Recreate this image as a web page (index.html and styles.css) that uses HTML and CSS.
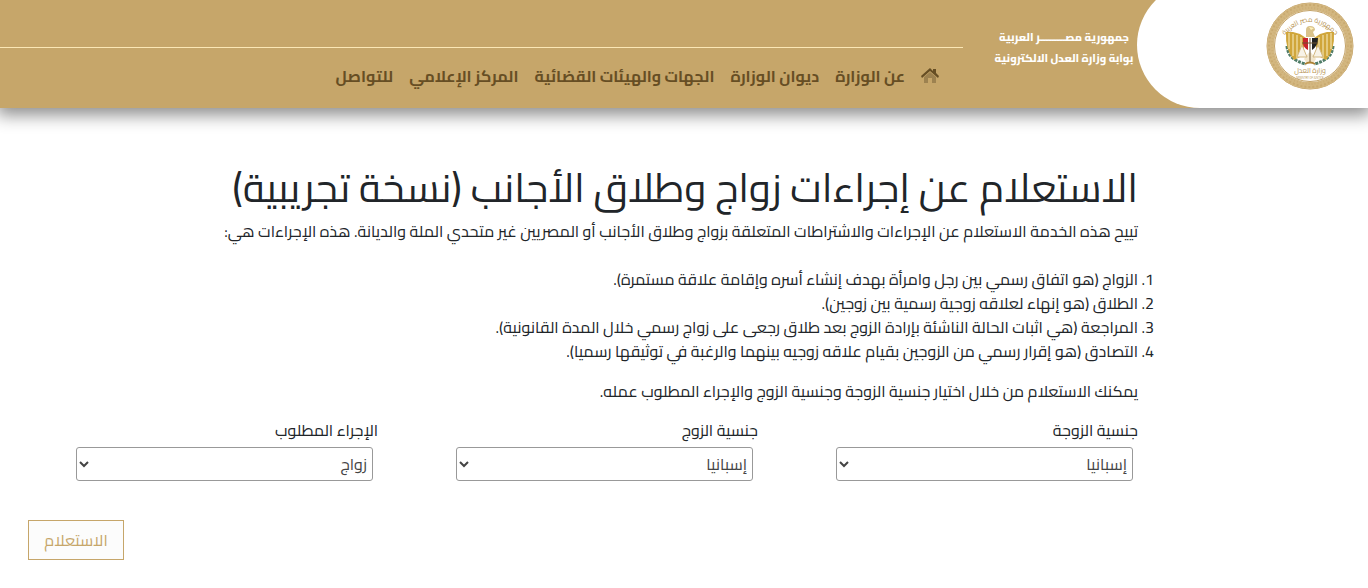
FILE: index.html
```html
<!DOCTYPE html>
<html lang="ar" dir="rtl">
<head>
    <meta charset="UTF-8">
    <meta name="viewport" content="width=device-width, initial-scale=1.0">
    <title>بوابة وزارة العدل الالكترونية</title>
    <link rel="stylesheet" href="styles.css">
</head>
<body>

    <header class="site-header">
        <div class="header-inner">
            <div class="logo-area">
                <svg class="logo" viewBox="0 0 88 88" role="img" aria-label="وزارة العدل">
                    <defs>
                        <path id="seal-top" d="M16 36 Q44 4 72 36"/>
                    </defs>
                    <circle cx="44" cy="44" r="43" fill="#fff" stroke="#c3a164" stroke-width="1"/>
                    <circle cx="44" cy="44" r="39.5" fill="none" stroke="#d3b780" stroke-width="7"/>
                    <circle cx="44" cy="44" r="41" fill="none" stroke="#c9aa70" stroke-width="2" stroke-dasharray="2 2"/>
                    <circle cx="44" cy="44" r="38" fill="none" stroke="#ccae76" stroke-width="2" stroke-dasharray="1 2"/>
                    <circle cx="44" cy="44" r="35.5" fill="#fff" stroke="#c3a164" stroke-width="1"/>
                    <text class="seal-text" font-size="7"><textPath href="#seal-top" startOffset="50%" text-anchor="middle">جمهورية مصر العربية</textPath></text>
                    <!-- laurel -->
                    <path d="M21 44 Q22 58 40 62 M67 44 Q66 58 48 62" fill="none" stroke="#507d68" stroke-width="3" stroke-dasharray="3 1"/>
                    <!-- wings -->
                    <path d="M40 36 L34 32 L27 30 L20 30 Q19 48 28 58 L36 54 Z M48 36 L54 32 L61 30 L68 30 Q69 48 60 58 L52 54 Z" fill="#d0a63b"/>
                    <path d="M23 31 V47 M27 32 V54 M31 33 V56 M35 35 V54 M65 31 V47 M61 32 V54 M57 33 V56 M53 35 V54" fill="none" stroke="#f8edc5" stroke-width="1"/>
                    <path d="M38 57 L44 49 L50 57 L48 60 H40 Z" fill="#f2e6cc"/>
                    <!-- head -->
                    <path d="M40 35 L40 28 Q40 24 44 24 Q49 24 49 28 L47 30 L49 35 Z" fill="#d9c28a"/>
                    <path d="M43 25 L48 26 L45 28 Z" fill="#fff2bd"/>
                    <!-- shield and scales -->
                    <path d="M37 36 H42 V48 Q38 46 37 42 Z" fill="#c9252d"/>
                    <path d="M42 36 H46 V49 L44 51 L42 49 Z" fill="#fff"/>
                    <path d="M46 36 H52 Q52 44 46 48 Z" fill="#222"/>
                    <path d="M36 41 H52 M44 36 V61" stroke="#6d5433" stroke-width="1"/>
                    <path d="M36 43 L31 55 H41 Z M52 43 L47 55 H57 Z" fill="#f8f3e8" stroke="#d3b780" stroke-width="1"/>
                    <path d="M39 62 Q44 59 49 62" fill="none" stroke="#ae8132" stroke-width="2"/>
                    <text class="seal-text" x="44" y="71" font-size="7" text-anchor="middle">وزارة العدل</text>
                    <text class="seal-text" x="44" y="77" font-size="3" text-anchor="middle">MINISTRY OF JUSTICE</text>
                </svg>
            </div>

            <div class="site-name">
                <span>جمهورية مصـــــــــر العربية</span>
                <span>بوابة وزارة العدل الالكترونية</span>
            </div>

            <nav class="main-nav">
                <ul>
                    <li>
                        <a href="#" aria-label="الرئيسية">
                            <svg class="home-icon" viewBox="0 0 18 16">
                                <path class="house" d="M3 9 L9 4 L15 9 V15 H11 V10 H7 V15 H3 Z"/>
                                <path class="roof" d="M0 8 L9 0 L12 3 V1 H15 V5 L18 8 L17 10 L9 3 L1 10 Z"/>
                            </svg>
                        </a>
                    </li>
                    <li><a href="#">عن الوزارة</a></li>
                    <li><a href="#">ديوان الوزارة</a></li>
                    <li><a href="#">الجهات والهيئات القضائية</a></li>
                    <li><a href="#">المركز الإعلامي</a></li>
                    <li><a href="#">للتواصل</a></li>
                </ul>
            </nav>
        </div>
    </header>

    <main class="content">
        <h1>الاستعلام عن إجراءات زواج وطلاق الأجانب (نسخة تجريبية)</h1>
        <p>تييح هذه الخدمة الاستعلام عن الإجراءات والاشتراطات المتعلقة بزواج وطلاق الأجانب أو المصريين غير متحدي الملة والديانة. هذه الإجراءات هي:</p>

        <ol>
            <li>الزواج (هو اتفاق رسمي بين رجل وامرأة بهدف إنشاء أسره وإقامة علاقة مستمرة).</li>
            <li>الطلاق (هو إنهاء لعلاقه زوجية رسمية بين زوجين).</li>
            <li>المراجعة (هي اثبات الحالة الناشئة بإرادة الزوج بعد طلاق رجعى على زواج رسمي خلال المدة القانونية).</li>
            <li>التصادق (هو إقرار رسمي من الزوجين بقيام علاقه زوجيه بينهما والرغبة في توثيقها رسميا).</li>
        </ol>

        <p>يمكنك الاستعلام من خلال اختيار جنسية الزوجة وجنسية الزوج والإجراء المطلوب عمله.</p>

        <form>
            <div class="fields">
                <div class="field">
                    <label for="wife">جنسية الزوجة</label>
                    <select id="wife">
                        <option>إسبانيا</option>
                    </select>
                </div>
                <div class="field">
                    <label for="husband">جنسية الزوج</label>
                    <select id="husband">
                        <option>إسبانيا</option>
                    </select>
                </div>
                <div class="field">
                    <label for="procedure">الإجراء المطلوب</label>
                    <select id="procedure">
                        <option>زواج</option>
                    </select>
                </div>
            </div>
            <div class="actions">
                <button type="button">الاستعلام</button>
            </div>
        </form>
    </main>

</body>
</html>
```
FILE: styles.css
```css
* {
    box-sizing: border-box;
}

body {
    margin: 0;
    background-color: #fff;
    color: #212529;
    font-family: Cairo, 'DejaVu Sans Condensed', 'DejaVu Sans', sans-serif;
    font-size: 16px;
    line-height: 24px;
}

.site-header {
    background-color: #c6a66a;
    box-shadow: 0 4px 16px 3px rgba(0, 0, 0, 0.45);
}

.header-inner {
    display: flex;
    height: 108px;
    overflow: hidden;
}

.logo-area {
    flex: 0 0 231px;
    height: 126px;
    margin-top: -18px;
    padding: 20px 14px 0 0;
    background-color: #fff;
    border-radius: 63px 0 0 63px;
}

.logo {
    display: block;
    width: 88px;
    height: 88px;
}

.seal-text {
    fill: #b5904e;
}

.site-name {
    flex: 0 0 174px;
    display: flex;
    flex-direction: column;
    align-items: center;
    padding: 27px 2px 0 30px;
    color: #fff;
    font-size: 11px;
    font-weight: 800;
    line-height: 21px;
    white-space: nowrap;
}

.main-nav {
    flex: 1;
    margin-top: 47px;
    border-top: 1px solid #fbe7b5;
}

.main-nav ul {
    display: flex;
    gap: 16px;
    margin: 0;
    padding: 16px 24px 0 0;
    list-style: none;
}

.main-nav a {
    color: #664e24;
    font-size: 16px;
    font-weight: bold;
    text-decoration: none;
    white-space: nowrap;
}

.home-icon {
    display: block;
    width: 18px;
    height: 16px;
    margin-top: 4px;
}

.roof {
    fill: #664e24;
}

.house {
    fill: #9d8250;
}

.content {
    padding: 56px 215px 28px 13px;
}

h1 {
    margin: 0 15px 7px;
    font-size: 40px;
    font-weight: normal;
    line-height: 48px;
}

p {
    margin: 0 15px 16px;
}

ol {
    margin: 24px 15px 16px;
    padding: 0;
}

.fields {
    display: flex;
}

.field {
    flex: 1;
    padding: 0 15px;
}

.field label {
    display: block;
    margin-bottom: 6px;
    line-height: 22px;
}

select {
    display: block;
    width: 85%;
    height: 34px;
    margin-right: 5px;
    padding: 0 1px;
    border: 1px solid #999;
    border-radius: 3px;
    background-color: #fff;
    color: #444;
    font-family: inherit;
    font-size: 16px;
}

.actions {
    display: flex;
    justify-content: flex-end;
    margin-top: 39px;
    padding: 0 15px;
}

button {
    width: 96px;
    height: 40px;
    padding: 0;
    border: 1px solid #c6a66a;
    background-color: #fcfcfc;
    color: #c6a66a;
    font-family: inherit;
    font-size: 16px;
    cursor: pointer;
}
```
